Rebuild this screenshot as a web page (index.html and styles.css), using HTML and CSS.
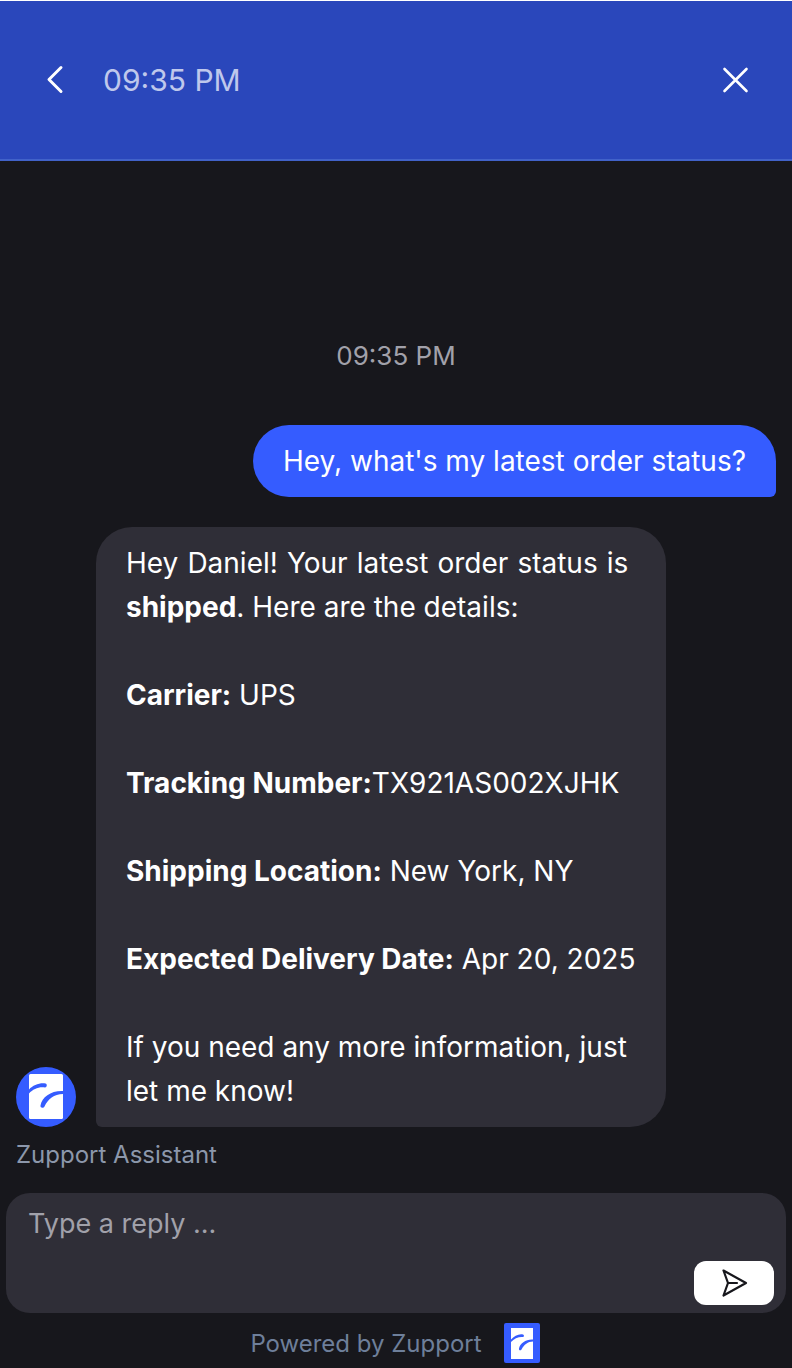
FILE: index.html
```html
<!DOCTYPE html>
<html lang="en">
<head>
  <meta charset="UTF-8" />
  <meta name="viewport" content="width=device-width, initial-scale=1.0" />
  <title>Zupport</title>
  <link rel="stylesheet" href="styles.css">
</head>
<body>
  <header class="top-bar">
    <div class="top-left">
      <svg class="back-icon" width="20" height="30" viewBox="0 0 20 30" fill="none" stroke="#fff" stroke-width="3" stroke-linecap="round" stroke-linejoin="round">
        <path d="M16 2.5 L4 14.5 L16 26.5"/>
      </svg>
      <span class="top-time">09:35 PM</span>
    </div>
    <svg class="close-icon" width="28" height="28" viewBox="0 0 28 28" fill="none" stroke="#fff" stroke-width="2.6" stroke-linecap="round">
      <path d="M2.5 3 L24.5 25 M24.5 3 L2.5 25"/>
    </svg>
  </header>

  <main class="chat">
    <div class="chat-time">09:35 PM</div>

    <div class="bubble-user">Hey, what's my latest order status?</div>

    <div class="reply-row">
      <svg class="avatar" width="60" height="60" viewBox="0 0 60 60">
        <circle cx="30" cy="30" r="30" fill="#355cff"/>
        <rect x="13" y="7" width="34" height="45" rx="1.5" fill="#fff"/>
        <path d="M13 22.5 C17 18 24 15.5 29.5 16.5 C31.5 17 31 20.5 29 20.5 C23 19.5 17 22 13 26.5 Z" fill="#355cff"/>
        <path d="M24.5 38.5 C26 30 35 23.5 47 24 L47 27 C38 27 32 32 28.5 39.5 C27.5 41.5 24 41 24.5 38.5 Z" fill="#355cff"/>
      </svg>
      <div class="bubble-bot">
        <p><span class="intro">Hey Daniel! Your latest order status is</span> <b>shipped</b>. Here are the details:</p>
        <p><b>Carrier:</b> UPS</p>
        <p><b>Tracking Number:</b>TX921AS002XJHK</p>
        <p><b>Shipping Location:</b> New York, NY</p>
        <p><b>Expected Delivery Date:</b> Apr 20, 2025</p>
        <p>If you need any more information, just let me know!</p>
      </div>
    </div>
    <div class="bot-name">Zupport Assistant</div>
  </main>

  <form class="composer">
    <div class="placeholder">Type a reply ...</div>
    <button class="send-btn" type="button" aria-label="Send">
      <svg width="28" height="30" viewBox="0 0 28 30" fill="none" stroke="#17171c" stroke-width="2.2" stroke-linecap="round" stroke-linejoin="round">
        <path d="M3.5 2.5 L26 15 L3.5 27.5 L8 15 Z M8 15 L17 15"/>
      </svg>
    </button>
  </form>

  <footer class="powered">
    <span>Powered by Zupport</span>
    <svg width="36" height="40" viewBox="0 0 36 40">
      <rect width="36" height="40" rx="2" fill="#355cff"/>
      <rect x="7" y="5" width="22" height="31" fill="#fff"/>
      <path d="M7 16.5 C10 13 15 10.5 19 11.5 C20.5 12 20 14 19 14 C15 13.5 10 15.5 7 19 Z" fill="#355cff"/>
      <path d="M15 25.5 C16 20.5 22 16 29 16.5 L29 18.5 C24 18.5 20 21.5 17.5 26.5 C16.5 28 14.7 27.5 15 25.5 Z" fill="#355cff"/>
    </svg>
  </footer>
</body>
</html>
```

FILE: styles.css
```css
body {
  margin: 0;
  height: 1368px;
  overflow: hidden;
  font-family: Inter, "Liberation Sans", sans-serif;
  background-color: #17171c;
  color: #fff;
  display: flex;
  flex-direction: column;
}

.top-bar {
  box-sizing: border-box;
  height: 161px;
  padding: 0 42px 0 45px;
  background-color: #2a47bb;
  border-top: 1px solid #fff;
  border-bottom: 2px solid #4162c9;
  display: flex;
  align-items: center;
  justify-content: space-between;
  flex-shrink: 0;
}

.top-left {
  display: flex;
  align-items: center;
  gap: 38px;
}

.top-time {
  font-size: 30px;
  color: #bfc8ec;
}

.chat {
  flex: 1;
  padding: 0 16px;
  display: flex;
  flex-direction: column;
}

.chat-time {
  margin-top: 179px;
  text-align: center;
  font-size: 26px;
  line-height: 32px;
  color: #a1a1aa;
}

.bubble-user {
  align-self: flex-end;
  margin-top: 53px;
  padding: 14px 30px;
  font-size: 28px;
  line-height: 44px;
  background-color: #355cff;
  border-radius: 36px 36px 6px 36px;
}

.reply-row {
  margin-top: 30px;
  display: flex;
  align-items: flex-end;
  gap: 20px;
}

.avatar {
  flex-shrink: 0;
}

.bubble-bot {
  box-sizing: border-box;
  width: 570px;
  padding: 14px 30px;
  font-size: 28px;
  line-height: 44px;
  background-color: #2f2e37;
  border-radius: 36px 36px 36px 6px;
}

.bubble-bot p {
  margin: 0 0 44px;
}

.bubble-bot p:last-child {
  margin-bottom: 0;
}

.bubble-bot b {
  font-weight: 700;
}

.intro {
  word-spacing: 1.2px;
}

.bot-name {
  margin-top: 12px;
  font-size: 24px;
  line-height: 32px;
  color: #8c97ab;
}

.composer {
  box-sizing: border-box;
  height: 120px;
  margin: 0 6px;
  padding: 14px 12px 8px 22px;
  background-color: #2f2e37;
  border-radius: 24px;
  display: flex;
  flex-direction: column;
  justify-content: space-between;
  flex-shrink: 0;
}

.placeholder {
  font-size: 27px;
  line-height: 34px;
  color: #a1a1aa;
}

.send-btn {
  align-self: flex-end;
  width: 80px;
  height: 44px;
  padding: 0;
  border: none;
  border-radius: 12px;
  background-color: #fff;
  display: flex;
  align-items: center;
  justify-content: center;
  cursor: pointer;
}

.powered {
  height: 55px;
  padding: 5px 2px 0 0;
  box-sizing: border-box;
  display: flex;
  align-items: center;
  justify-content: center;
  gap: 22px;
  font-size: 24px;
  color: #6e7f9a;
  flex-shrink: 0;
}
```
